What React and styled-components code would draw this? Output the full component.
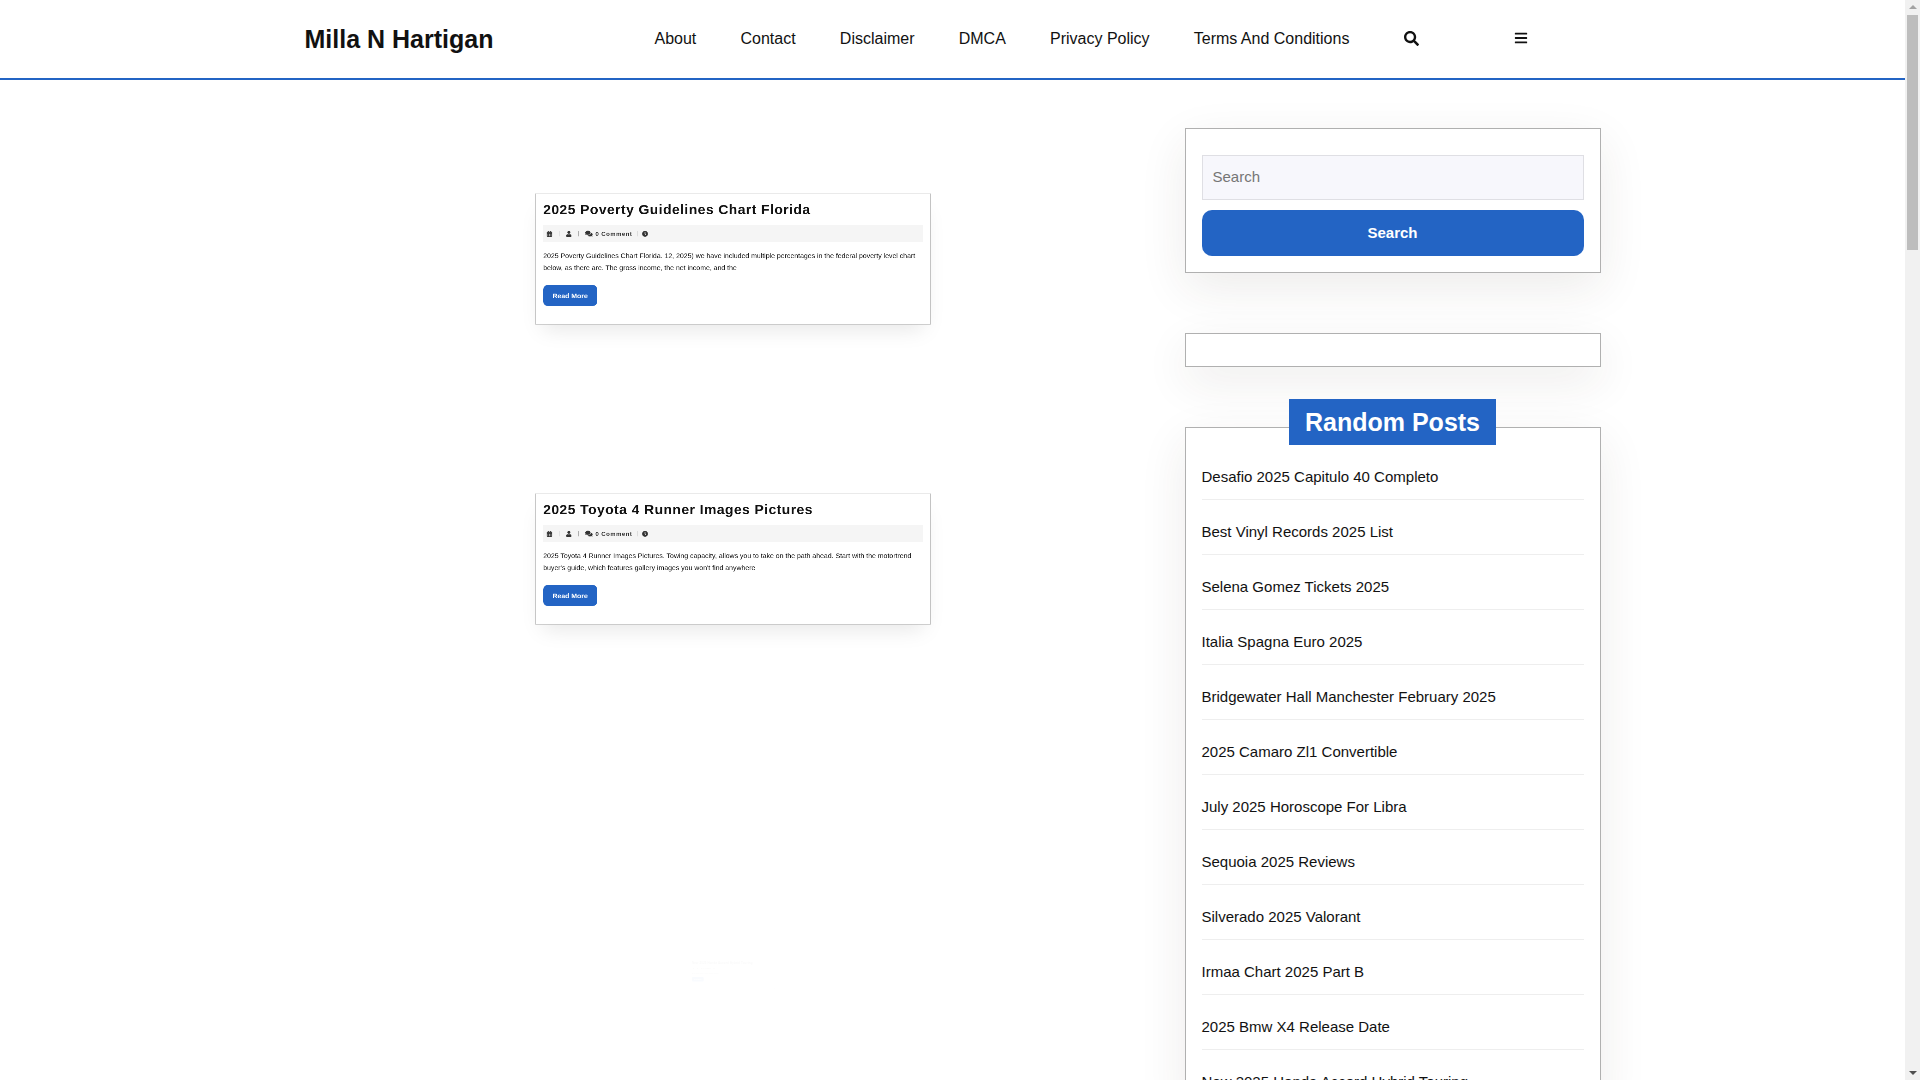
import styled, { createGlobalStyle } from "styled-components";
import { FaSearch, FaBars, FaCalendarAlt, FaUser, FaComments, FaClock } from "react-icons/fa";

const GlobalStyle = createGlobalStyle`
  body {
    margin: 0;
    background: #fff;
    color: #111;
    font-family: "Liberation Sans", Arial, sans-serif;
    font-size: 15px;
  }
`;

const Page = styled.div`
  min-height: 4825px;
  margin-right: 15px;
`;

const ScrollTrack = styled.div`
  position: fixed;
  top: 0;
  right: 0;
  bottom: 0;
  width: 15px;
  display: flex;
  flex-direction: column;
  background: #f1f1f1;
`;

const ScrollArrow = styled.span`
  width: 0;
  height: 0;
  margin: ${(p) => (p.$down ? "auto auto 5px" : "5px auto 0")};
  border-left: 4px solid transparent;
  border-right: 4px solid transparent;
  border-bottom: ${(p) => (p.$down ? "0" : "4px solid #a3a3a3")};
  border-top: ${(p) => (p.$down ? "4px solid #505050" : "0")};
`;

const ScrollThumb = styled.div`
  height: 235px;
  margin: 6px 2px 0;
  background: #bdbdbd;
`;

const Header = styled.header`
  height: 78px;
  border-bottom: 2px solid #2364c4;
`;

const HeaderInner = styled.div`
  width: 1320px;
  height: 100%;
  margin: 0 auto;
  padding: 0 12px;
  box-sizing: border-box;
  display: flex;
  align-items: center;
`;

const Logo = styled.a`
  width: 350px;
  font-size: 25px;
  font-weight: 700;
  color: #111;
`;

const Nav = styled.nav`
  display: flex;
  gap: 44.2px;
`;

const NavLink = styled.a`
  font-size: 16px;
  color: #111;
`;

const IconButton = styled.span`
  display: flex;
  margin-left: ${(p) => p.$gap}px;
  margin-bottom: 2px;
  font-size: ${(p) => p.$size}px;
  color: #111;
`;

const Content = styled.div`
  width: 1320px;
  margin: 0 auto;
  display: grid;
  grid-template-columns: 880px 440px;
`;

const MainCol = styled.main`
  padding: 36.5px 12px 0;
  display: flex;
  flex-direction: column;
  gap: 16px;
`;

const Card = styled.article`
  height: 284px;
  padding: 0 16px;
  box-sizing: border-box;
  background: #fff;
  border: 1px solid #bbb;
  border-top-color: #ddd;
  box-shadow: 0 25px 45px -15px rgba(0, 0, 0, 0.1);
  transform: translateY(${(p) => p.$shift || 0}px) scale(${(p) => p.$scale});
  opacity: ${(p) => p.$opacity};
  will-change: transform;
  filter: blur(0.35px);
`;

const CardTitle = styled.h2`
  margin: 0;
  padding-top: 16px;
  height: 52px;
  font-size: 30px;
  line-height: 36px;
  font-weight: 700;
  letter-spacing: 1px;
  color: #111;
  white-space: nowrap;
`;

const MetaBar = styled.div`
  height: 36px;
  display: flex;
  align-items: center;
  padding-left: 7px;
  background: #f5f5f5;
  font-size: 13px;
  font-weight: 700;
  letter-spacing: 1px;
  color: #333;
`;

const MetaItem = styled.span`
  display: flex;
  align-items: center;
  gap: 6px;

  svg {
    font-size: 16px;
  }
`;

const MetaSep = styled.span`
  width: 1px;
  height: 12px;
  margin: 0 ${(p) => p.$space || 14}px;
  background: #aaa;
`;

const Excerpt = styled.p`
  margin: 17px 0 24px;
  font-size: 15px;
  line-height: 26px;
  color: #111;
  white-space: nowrap;
`;

const ReadMore = styled.a`
  display: inline-flex;
  align-items: center;
  height: 46px;
  padding: 0 20px;
  border-radius: 10px;
  background: #2364c4;
  color: #fff;
  font-size: 15px;
  font-weight: 700;
`;

const SideCol = styled.aside`
  padding: 48px 12px 0;
  display: flex;
  flex-direction: column;
  gap: 60px;
`;

const Widget = styled.section`
  border: 1px solid #b0b0b0;
  background: #fff;
  box-shadow: 0 15px 45px rgba(60, 40, 30, 0.09);
`;

const SearchWidget = styled(Widget)`
  height: 145px;
  box-sizing: border-box;
  padding: 26px 16px 0;
`;

const SearchInput = styled.input`
  display: block;
  width: 100%;
  height: 45px;
  box-sizing: border-box;
  padding: 0 10px 2px;
  background: #f7f7fc;
  border: 1px solid #dfdfe4;
  outline: none;
  font-family: inherit;
  font-size: 15px;
  color: #111;

  &::placeholder {
    color: #757575;
    opacity: 1;
  }
`;

const SearchButton = styled.button`
  display: block;
  width: 100%;
  height: 46px;
  margin-top: 10px;
  padding: 0 0 2px;
  border: none;
  border-radius: 10px;
  background: #2364c4;
  color: #fff;
  font-family: inherit;
  font-size: 15px;
  font-weight: 700;
`;

const EmptyWidget = styled(Widget)`
  height: 34px;
  box-sizing: border-box;
`;

const ListWidget = styled(Widget)`
  padding: 0 16px;
`;

const WidgetTitle = styled.h3`
  width: fit-content;
  height: 46px;
  margin: -29px auto 0;
  padding: 0 16px;
  display: flex;
  align-items: center;
  background: #2364c4;
  color: #fff;
  font-size: 25px;
  font-weight: 700;
`;

const PostList = styled.ul`
  margin: 0;
  padding: 0;
  list-style: none;
`;

const PostItem = styled.li`
  padding: 23px 0 13px;
  line-height: 18px;
  font-size: 15px;
  color: #111;
  border-bottom: 1px solid #eee;
`;

const navItems = ["About", "Contact", "Disclaimer", "DMCA", "Privacy Policy", "Terms And Conditions"];

const posts = [
  {
    title: "2025 Poverty Guidelines Chart Florida",
    lines: [
      "2025 Poverty Guidelines Chart Florida. 12, 2025) we have included multiple percentages in the federal poverty level chart",
      "below, as there are. The gross income, the net income, and the",
    ],
    scale: 0.4618,
    opacity: 1,
  },
  {
    title: "2025 Toyota 4 Runner Images Pictures",
    lines: [
      "2025 Toyota 4 Runner Images Pictures. Towing capacity, allows you to take on the path ahead. Start with the motortrend",
      "buyer's guide, which features gallery images you won't find anywhere",
    ],
    scale: 0.4618,
    opacity: 1,
  },
  {
    title: "New 2025 Honda Accord Hybrid Touring",
    lines: ["New 2025 Honda Accord Hybrid Touring.", ""],
    scale: 0.1,
    opacity: 0.03,
    shift: 115,
  },
];

const randomPosts = [
  "Desafio 2025 Capitulo 40 Completo",
  "Best Vinyl Records 2025 List",
  "Selena Gomez Tickets 2025",
  "Italia Spagna Euro 2025",
  "Bridgewater Hall Manchester February 2025",
  "2025 Camaro Zl1 Convertible",
  "July 2025 Horoscope For Libra",
  "Sequoia 2025 Reviews",
  "Silverado 2025 Valorant",
  "Irmaa Chart 2025 Part B",
  "2025 Bmw X4 Release Date",
  "New 2025 Honda Accord Hybrid Touring",
];

export default function App() {
  return (
    <Page>
      <GlobalStyle />
      <Header>
        <HeaderInner>
          <Logo>Milla N Hartigan</Logo>
          <Nav>
            {navItems.map((item) => (
              <NavLink key={item}>{item}</NavLink>
            ))}
          </Nav>
          <IconButton $gap={55} $size={15}>
            <FaSearch />
          </IconButton>
          <IconButton $gap={95} $size={14}>
            <FaBars />
          </IconButton>
        </HeaderInner>
      </Header>
      <Content>
        <MainCol>
          {posts.map((post) => (
            <Card key={post.title} $scale={post.scale} $opacity={post.opacity} $shift={post.shift}>
              <CardTitle>{post.title}</CardTitle>
              <MetaBar>
                <FaCalendarAlt />
                <MetaSep />
                <FaUser />
                <MetaSep />
                <MetaItem>
                  <FaComments />0 Comment
                </MetaItem>
                <MetaSep $space={10} />
                <FaClock />
              </MetaBar>
              <Excerpt>
                {post.lines[0]}
                <br />
                {post.lines[1]}
              </Excerpt>
              <ReadMore>Read More</ReadMore>
            </Card>
          ))}
        </MainCol>
        <SideCol>
          <SearchWidget>
            <SearchInput placeholder="Search" />
            <SearchButton>Search</SearchButton>
          </SearchWidget>
          <EmptyWidget />
          <ListWidget>
            <WidgetTitle>Random Posts</WidgetTitle>
            <PostList>
              {randomPosts.map((item) => (
                <PostItem key={item}>{item}</PostItem>
              ))}
            </PostList>
          </ListWidget>
        </SideCol>
      </Content>
      <ScrollTrack>
        <ScrollArrow />
        <ScrollThumb />
        <ScrollArrow $down />
      </ScrollTrack>
    </Page>
  );
}
